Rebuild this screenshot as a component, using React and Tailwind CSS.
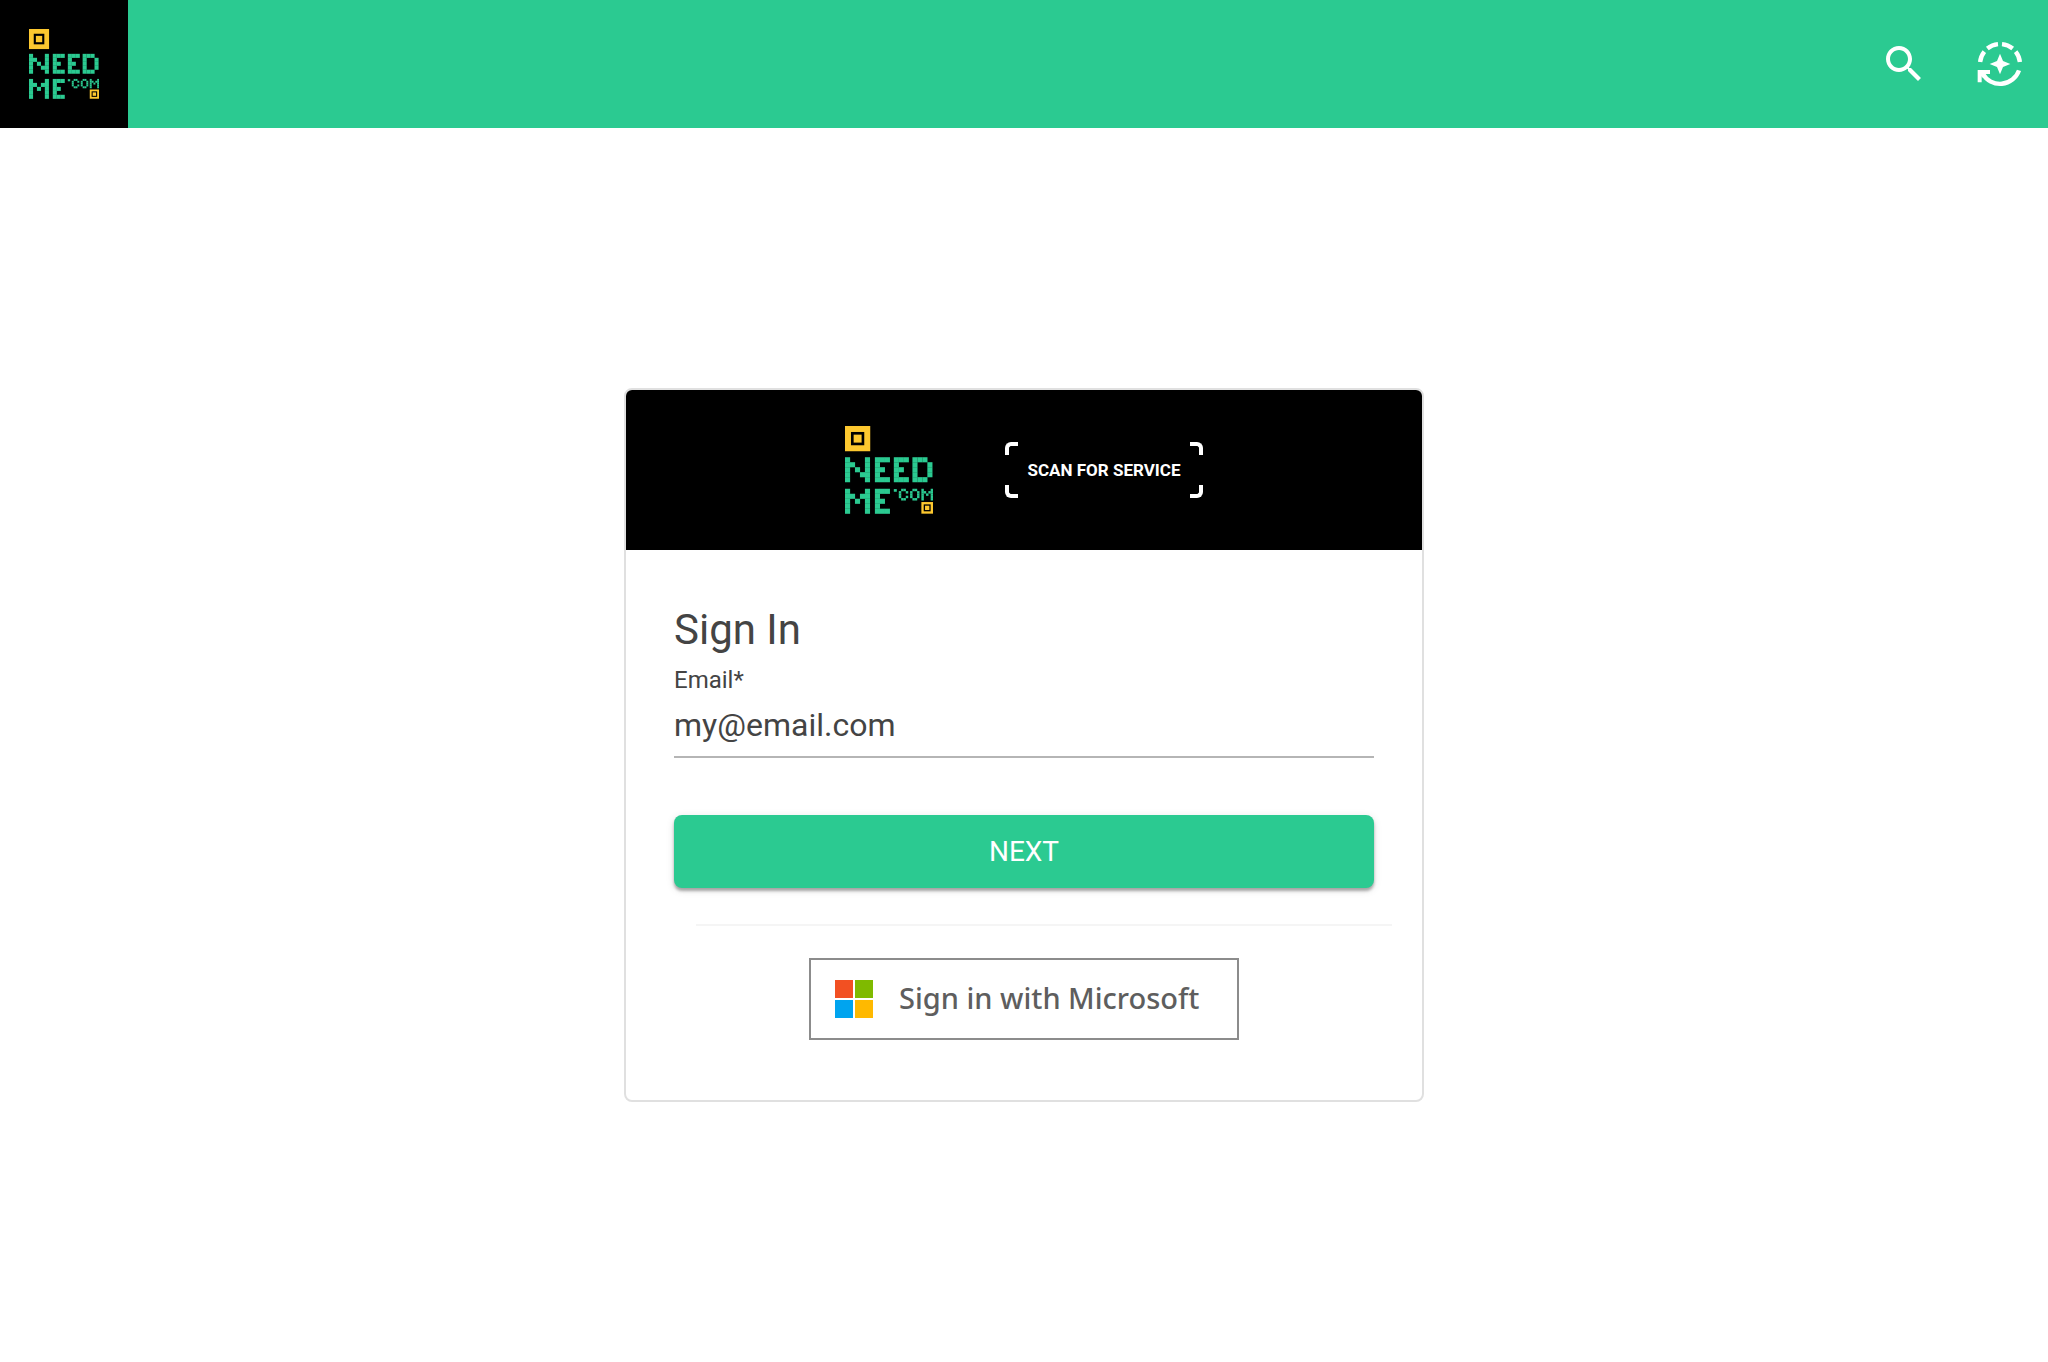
const GREEN = '#2bca91';
const YELLOW = '#fdc82f';

const GLYPHS = {
  N: ['X...X', 'XX..X', 'X.X.X', 'X..XX', 'X...X'],
  M: ['X...X', 'XX.XX', 'X.X.X', 'X...X', 'X...X'],
  E: ['XXX', 'X..', 'XX.', 'X..', 'XXX'],
  D: ['XXX.', 'X..X', 'X..X', 'X..X', 'XXX.'],
  C: ['.XX.', 'X..X', 'X...', 'X..X', '.XX.'],
  O: ['.XX.', 'X..X', 'X..X', 'X..X', '.XX.'],
};

function PixelGlyph({ glyph, x, y, cell }) {
  return GLYPHS[glyph].flatMap((row, r) =>
    [...row].map((c, i) =>
      c === 'X' ? (
        <rect key={`${r}-${i}`} x={x + i * cell} y={y + r * cell} width={cell + 0.4} height={cell + 0.4} fill={GREEN} />
      ) : null
    )
  );
}

function Logo({ className }) {
  return (
    <svg viewBox="0 0 265 265" className={className} role="img" aria-label="NeedMe.com">
      <rect width="76" height="76" fill={YELLOW} />
      <rect x="22" y="22" width="32" height="32" fill="none" stroke="#000" strokeWidth="8" />
      <PixelGlyph glyph="N" x={0} y={94} cell={15} />
      <PixelGlyph glyph="E" x={90} y={94} cell={15} />
      <PixelGlyph glyph="E" x={147} y={94} cell={15} />
      <PixelGlyph glyph="D" x={203} y={94} cell={15} />
      <PixelGlyph glyph="M" x={0} y={189} cell={15} />
      <PixelGlyph glyph="E" x={90} y={189} cell={15} />
      <rect x="147" y="190" width="9" height="8" fill={GREEN} />
      <PixelGlyph glyph="C" x={162} y={189} cell={7} />
      <PixelGlyph glyph="O" x={196} y={189} cell={7} />
      <PixelGlyph glyph="M" x={230} y={189} cell={7} />
      <rect x="230" y="229" width="35" height="35" fill={YELLOW} />
      <rect x="239" y="238" width="17" height="17" fill="none" stroke="#000" strokeWidth="4" />
    </svg>
  );
}

function SearchIcon() {
  return (
    <svg viewBox="0 0 24 24" className="size-12 fill-white" aria-hidden="true">
      <path d="M15.5 14h-.79l-.28-.27C15.41 12.59 16 11.11 16 9.5 16 5.91 13.09 3 9.5 3S3 5.91 3 9.5 5.91 16 9.5 16c1.61 0 3.09-.59 4.23-1.57l.27.28v.79l5 4.99L20.49 19l-4.99-5zm-6 0C7.01 14 5 11.99 5 9.5S7.01 5 9.5 5 14 7.01 14 9.5 11.99 14 9.5 14z" />
    </svg>
  );
}

function ScanIcon() {
  return (
    <svg viewBox="0 0 144 144" className="size-12" aria-hidden="true">
      <g fill="none" stroke="#fff" strokeWidth="13">
        <path d="M12.4 66A60 60 0 0 1 25 35" />
        <path d="M34 25.500A60 60 0 0 1 66 12.300" />
        <path d="M78 12.300A60 60 0 0 1 110 25.500" />
        <path d="M119 35A60 60 0 0 1 131.600 66" />
        <path d="M129 91A60 60 0 0 1 20 101" />
      </g>
      <path fill="#fff" d="M5 90H42V102H26L30 108L21 114L17 109V127H5Z" />
      <path fill="#fff" d="M72 41L81 63L103 72L81 81L72 103L63 81L41 72L63 63Z" />
    </svg>
  );
}

function ScanBadge() {
  return (
    <div className="relative flex h-14 w-[198px] items-center justify-center pt-0.5">
      <span className="absolute left-0 top-0 size-[13px] rounded-tl-md border-l-4 border-t-4 border-white" />
      <span className="absolute right-0 top-0 size-[13px] rounded-tr-md border-r-4 border-t-4 border-white" />
      <span className="absolute bottom-0 left-0 size-[13px] rounded-bl-md border-b-4 border-l-4 border-white" />
      <span className="absolute bottom-0 right-0 size-[13px] rounded-br-md border-b-4 border-r-4 border-white" />
      <span className="whitespace-nowrap text-[17px] font-bold text-white">SCAN FOR SERVICE</span>
    </div>
  );
}

function MicrosoftMark() {
  return (
    <svg viewBox="0 0 38 38" className="size-[38px] shrink-0" aria-hidden="true">
      <rect width="18" height="18" fill="#f25022" />
      <rect x="20" width="18" height="18" fill="#7fba00" />
      <rect y="20" width="18" height="18" fill="#00a4ef" />
      <rect x="20" y="20" width="18" height="18" fill="#ffb900" />
    </svg>
  );
}

export default function App() {
  return (
    <div className="flex min-h-screen flex-col bg-white font-['Roboto',sans-serif] text-[#444444]">
      <header className="flex h-32 items-center justify-between bg-[#2bca91]">
        <a href="#" className="flex size-32 items-center justify-center bg-black">
          <Logo className="size-[70px]" />
        </a>
        <nav className="flex items-center gap-12 pr-6">
          <button type="button" aria-label="Search">
            <SearchIcon />
          </button>
          <button type="button" aria-label="Scan">
            <ScanIcon />
          </button>
        </nav>
      </header>

      <main className="flex flex-1 items-center justify-center">
        <section className="w-full max-w-[800px] overflow-hidden rounded-lg border-2 border-[#e0e0e0]">
          <div className="flex h-40 items-center justify-center gap-[72px] bg-black">
            <Logo className="size-[88px]" />
            <ScanBadge />
          </div>

          <form className="px-12 pb-[60px] pt-12" onSubmit={(e) => e.preventDefault()}>
            <h1 className="text-[42px] leading-[64px]">Sign In</h1>
            <label htmlFor="email" className="block pt-0.5 text-2xl leading-8">
              Email*
            </label>
            <input
              id="email"
              type="email"
              defaultValue="my@email.com"
              className="mt-1.5 block h-14 w-full border-b-2 border-[#b5b5b5] pb-2 text-[32px] outline-none"
            />
            <button
              type="submit"
              className="mt-[57px] flex h-[73px] w-full items-center justify-center rounded-lg bg-[#2bca91] text-[28px] text-white shadow-[0_3px_3px_rgba(0,0,0,0.3),0_2px_8px_rgba(0,0,0,0.12)]"
            >
              NEXT
            </button>
            <hr className="ml-[22px] mr-[-18px] mt-9 border-t-2 border-[#f5f5f5]" />
            <button
              type="button"
              className="mx-auto mt-8 flex h-[82px] w-[430px] items-center gap-[26px] border-2 border-[#8c8c8c] pl-6 font-['Noto_Sans',sans-serif] text-[29px] font-medium text-[#5e5e5e]"
            >
              <MicrosoftMark />
              <span className="whitespace-nowrap pb-0.5">Sign in with Microsoft</span>
            </button>
          </form>
        </section>
      </main>
    </div>
  );
}
